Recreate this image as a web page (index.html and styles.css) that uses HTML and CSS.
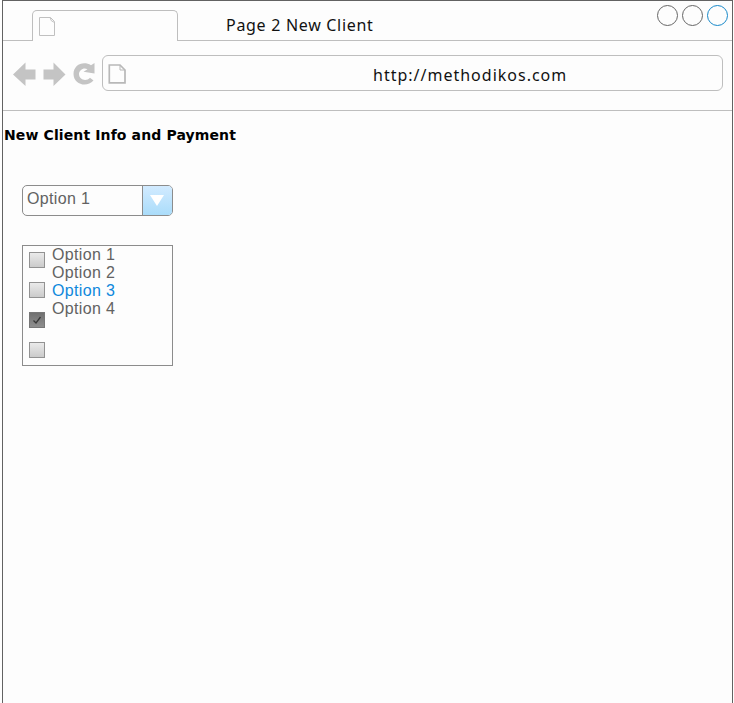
FILE: index.html
```
<!DOCTYPE html>
<html lang="en">
<head>
<meta charset="utf-8">
<title>Page 2 New Client</title>
<link rel="stylesheet" href="styles.css">
</head>
<body>
<div class="window">
  <header class="tabs">
    <div class="tabs-lead"></div>
    <div class="tab">
      <svg width="17" height="20" viewBox="0 0 17 20" fill="none" stroke="#c0c0c0"><path d="M.5 .5H11.5L15.500 4.500V18.500H.5ZM11 .5Q11.500 4.500 15.500 5.500"/></svg>
    </div>
    <div class="tabs-rest">
      <span class="title">Page 2 New Client</span>
      <div class="controls"><i class="dot"></i><i class="dot"></i><i class="dot active"></i></div>
    </div>
  </header>
  <nav class="toolbar">
    <svg class="nav-icons" width="84" height="26" viewBox="0 0 84 26" fill="#c4c4c4">
      <path d="M0 12.500 12.500 .5V7.500H22.500V17.500H12.500V24Z"/>
      <path d="M52.500 12.500 40.500 .5V7.500H30.500V17.500H40.500V24Z"/>
      <path d="M81.500 1V11.500L70.500 9.800L74.500 7.300C71 4.800 66 7.800 66 12C66 17.500 73 20 77 15.700L80.500 18.500C73.500 26.500 60.500 22 60.500 12C60.500 2.500 70.500-1.500 78 3.200Z"/>
    </svg>
    <div class="address">
      <svg width="19" height="21" viewBox="0 0 19 21" fill="none" stroke="#b8b8b8" stroke-width="1.700"><path d="M1.300 1H12L17 6V18.800H1.300Z"/><path d="M12 1V6H17" stroke-width="1"/></svg>
      <span class="url">http://methodikos.com</span>
    </div>
  </nav>
  <main>
    <h1>New Client Info and Payment</h1>
    <div class="select">
      <span class="value">Option 1</span>
      <span class="arrow"><svg width="14" height="11" viewBox="0 0 14 11"><path d="M0 0H14L7 11Z" fill="#fff"/></svg></span>
    </div>
    <div class="list">
      <div class="boxes">
        <i class="box"></i><i class="box"></i>
        <i class="box checked"><svg width="14" height="14" viewBox="0 0 14 14" fill="none" stroke="#383838" stroke-width="1.300"><path d="M3.500 7.500 6 10 10.500 4"/></svg></i>
        <i class="box"></i>
      </div>
      <ul>
        <li>Option 1</li>
        <li>Option 2</li>
        <li class="selected">Option 3</li>
        <li>Option 4</li>
      </ul>
    </div>
  </main>
</div>
</body>
</html>
```
FILE: styles.css
```
* { box-sizing: border-box; }
body { margin: 0; background: #fefefe; overflow: hidden; }
svg { display: block; flex: none; }
.window {
  width: 731px;
  height: 703px;
  margin-left: 2px;
  border: 1px solid #626262;
  border-bottom: 0;
  background: #fdfdfd;
}
.tabs { display: flex; height: 40px; }
.tabs-lead { width: 29px; border-bottom: 1px solid #bebebe; }
.tab {
  width: 146px;
  height: 31px;
  margin-top: 9px;
  padding: 6px 0 0 6px;
  border: 1px solid #bebebe;
  border-bottom: 0;
  border-radius: 5px 5px 0 0;
}
.tabs-rest {
  flex: 1;
  display: flex;
  justify-content: space-between;
  padding: 4px 4px 0 48px;
  border-bottom: 1px solid #bebebe;
}
.title, .url {
  font-family: "Noto Sans", sans-serif;
  font-size: 16px;
  line-height: 22px;
  color: #111;
  white-space: nowrap;
}
.title { margin-top: 9px; letter-spacing: .7px; }
.controls { display: flex; gap: 4px; }
.dot { width: 21px; height: 21px; border: 1px solid #666; border-radius: 50%; }
.dot.active { border-color: #1688c9; }
.toolbar {
  display: flex;
  height: 70px;
  padding: 14px 9px 0 10px;
  border-bottom: 1px solid #bebebe;
}
.nav-icons { margin: 7px 5px 0 0; }
.address {
  flex: 1;
  display: flex;
  height: 36px;
  padding: 8px 0 0 5px;
  border: 1px solid #bebebe;
  border-radius: 6px;
}
.url { margin: 0 0 0 246px; letter-spacing: 1px; }
h1 {
  margin: 15px 0 0 1px;
  font: bold 14px/18px "DejaVu Sans", sans-serif;
  letter-spacing: .12px;
  color: #000;
}
.select, .list {
  width: 151px;
  margin-left: 19px;
  font-family: "Liberation Sans", sans-serif;
  font-size: 16px;
  line-height: 18px;
  letter-spacing: .36px;
  color: #626262;
}
.select {
  display: flex;
  justify-content: space-between;
  height: 31px;
  margin-top: 41px;
  border: 1px solid #8c8c8c;
  border-radius: 5px;
  overflow: hidden;
}
.value { padding: 4px; }
.arrow {
  width: 30px;
  padding: 9px 0 0 7px;
  border-left: 1px solid #8c8c8c;
  background: linear-gradient(#d2ebff, #aadcfa);
}
.list {
  display: flex;
  gap: 7px;
  height: 121px;
  margin-top: 29px;
  padding: 0 6px;
  border: 1px solid #8c8c8c;
}
.boxes { display: flex; flex-direction: column; gap: 14px; padding-top: 6px; }
.box {
  width: 16px;
  height: 16px;
  border: 1px solid #929292;
  background: linear-gradient(#eaeaea, #cbcbcb);
}
.box.checked { border-color: #777; background: linear-gradient(#707070, #8e8e8e); }
ul { margin: 0; padding: 0; list-style: none; }
.selected { color: #0e88dc; }
```
